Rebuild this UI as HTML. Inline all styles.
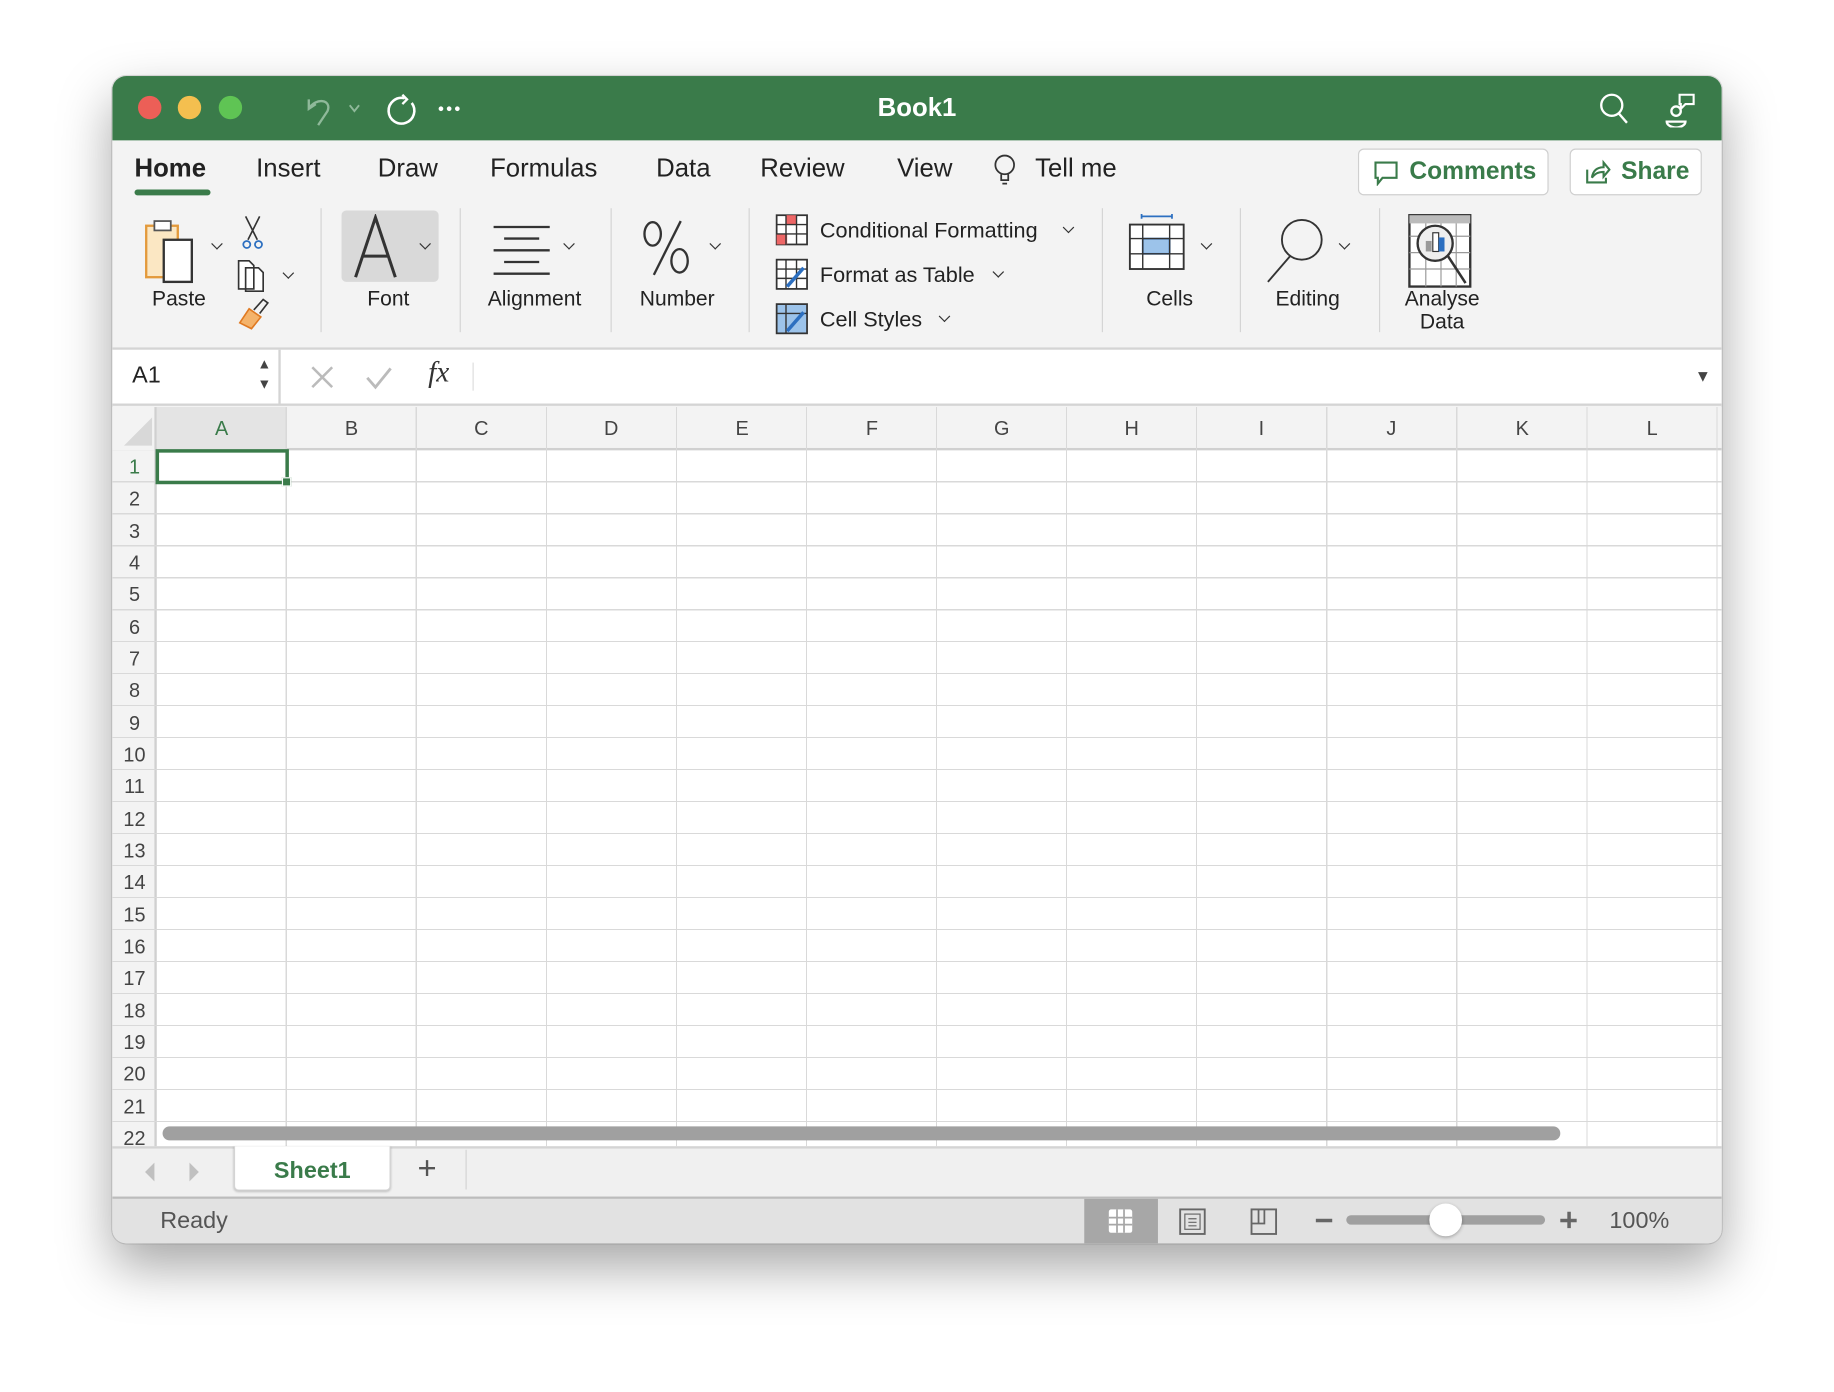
<!DOCTYPE html>
<html><head><meta charset="utf-8"><style>
*{box-sizing:border-box;margin:0;padding:0}
html,body{width:1834px;height:1392px;overflow:hidden;background:#fff;font-family:"Liberation Sans",sans-serif}
#s{position:absolute;left:0;top:0;width:1568px;height:1190px;transform:scale(1.16964);transform-origin:0 0}
.a{position:absolute}
#win{left:96px;top:65px;width:1376px;height:998px;border-radius:12px;overflow:hidden;background:#f3f3f3;box-shadow:0 20px 45px rgba(0,0,0,.35),0 0 0 1px rgba(0,0,0,.12)}
.t{position:absolute;white-space:nowrap;color:#222}
.tab{font-size:22px;top:66px}
.lbl{font-size:18px;color:#222;text-align:center}
.sep{position:absolute;top:113px;width:1px;height:106px;background:#d4d4d4}
.chev{position:absolute;width:7px;height:7px;border-right:1.6px solid #333;border-bottom:1.6px solid #333;transform:rotate(45deg)}
.ch{position:absolute;top:0;height:37px;font-size:17px;color:#444;text-align:center;line-height:37px}
.rh{position:absolute;left:0;width:38px;font-size:17px;color:#444;text-align:center}
</style></head><body><div id="s">
<div id="win" class="a">
 <div class="a" style="left:0;top:0;width:1376px;height:55px;background:#3a7b4a"></div>
 <div class="a" style="left:22px;top:17px;width:20px;height:20px;border-radius:50%;background:#ec5f57"></div>
 <div class="a" style="left:56px;top:17px;width:20px;height:20px;border-radius:50%;background:#f4bf4f"></div>
 <div class="a" style="left:91px;top:17px;width:20px;height:20px;border-radius:50%;background:#5fc454"></div>
 <svg class="a" style="left:160px;top:10px" width="150" height="36" viewBox="0 0 150 36">
  <path d="M8 10 L8 18 L14 14 M8 18 C14 8 28 10 24 20 L16 32" fill="none" stroke="#8fb99a" stroke-width="2"/>
  <path d="M43 15 l4 5 l4 -5" fill="none" stroke="#8fb99a" stroke-width="1.6"/>
  <path d="M90 9 A11 11 0 1 0 96 13" fill="none" stroke="#fff" stroke-width="2.2"/><path d="M88 6 L92 10 L88 14" fill="none" stroke="#fff" stroke-width="2"/>
  <circle cx="121" cy="18" r="2" fill="#fff"/><circle cx="128" cy="18" r="2" fill="#fff"/><circle cx="135" cy="18" r="2" fill="#fff"/>
 </svg>
 <div class="t" style="left:0;width:1376px;text-align:center;top:14px;font-size:22px;font-weight:bold;color:#fff">Book1</div>
 <svg class="a" style="left:1268px;top:12px" width="90" height="32">
  <circle cx="14" cy="13" r="9" fill="none" stroke="#fff" stroke-width="2"/><path d="M20 20 L27 28" stroke="#fff" stroke-width="2"/>
  <circle cx="69" cy="18" r="4" fill="none" stroke="#fff" stroke-width="2"/><path d="M61 27 a8 5 0 0 0 16 0 z" fill="none" stroke="#fff" stroke-width="2"/><path d="M72 4 h12 v8 h-7 l-4 4 v-4 h-1 z" fill="none" stroke="#fff" stroke-width="1.8"/>
 </svg>
 <div class="t tab" style="left:19px;font-weight:bold">Home</div>
 <div class="a" style="left:19px;top:97px;width:65px;height:5px;border-radius:3px;background:#3a7b4a"></div>
 <div class="t tab" style="left:123px">Insert</div>
 <div class="t tab" style="left:227px">Draw</div>
 <div class="t tab" style="left:323px">Formulas</div>
 <div class="t tab" style="left:465px">Data</div>
 <div class="t tab" style="left:554px">Review</div>
 <div class="t tab" style="left:671px">View</div>
 <svg class="a" style="left:752px;top:66px" width="22" height="28"><circle cx="11" cy="10" r="8" fill="none" stroke="#333" stroke-width="1.5"/><path d="M8 18 v5 h6 v-5 M9 26 h4" fill="none" stroke="#333" stroke-width="1.5"/></svg>
 <div class="t tab" style="left:789px">Tell me</div>
 <div class="a" style="left:1065px;top:62px;width:163px;height:40px;border:1px solid #cfcfcf;border-radius:5px;background:#fff"></div>
 <svg class="a" style="left:1078px;top:72px" width="22" height="22"><path d="M2 2 h18 v13 h-12 l-4 5 v-5 h-2 z" fill="none" stroke="#3a7b4a" stroke-width="1.8"/></svg>
 <div class="t" style="left:1109px;top:70px;font-size:21px;font-weight:bold;color:#3a7b4a">Comments</div>
 <div class="a" style="left:1246px;top:62px;width:113px;height:40px;border:1px solid #cfcfcf;border-radius:5px;background:#fff"></div>
 <svg class="a" style="left:1259px;top:71px" width="22" height="22"><path d="M2 9 v11 h16 v-4" fill="none" stroke="#3a7b4a" stroke-width="1.8"/><path d="M6 16 c1 -7 5 -9 10 -9 v-4 l5 6 l-5 6 v-4 c-4 0 -7 1 -10 5" fill="none" stroke="#3a7b4a" stroke-width="1.8"/></svg>
 <div class="t" style="left:1290px;top:70px;font-size:21px;font-weight:bold;color:#3a7b4a">Share</div>
 <svg class="a" style="left:24px;top:118px" width="140" height="105">
  <rect x="5" y="10" width="27" height="44" fill="#fbe7c3" stroke="#e39a3c" stroke-width="2"/><rect x="12" y="6" width="14" height="8" fill="#fff" stroke="#555" stroke-width="1.5"/>
  <rect x="20" y="22" width="24" height="36" fill="#fff" stroke="#333" stroke-width="2"/>
  <path d="M90 2 l10 20 M102 2 l-10 20" stroke="#333" stroke-width="1.4"/><circle cx="91" cy="26" r="3" fill="none" stroke="#2c6fc0" stroke-width="1.5"/><circle cx="101" cy="26" r="3" fill="none" stroke="#2c6fc0" stroke-width="1.5"/>
  <path d="M84 40 h9 l4 4 v20 h-13 z M90 46 h11 l4 4 v16 h-15 z" fill="#fff" stroke="#333" stroke-width="1.4"/>
  <path d="M85 93 l8 -12 l10 7 l-8 10 z" fill="#f4b36b" stroke="#e07a22" stroke-width="1.4"/><path d="M97 82 l8 -9 l4 3 l-7 9" fill="none" stroke="#333" stroke-width="1.4"/>
 </svg>
 <div class="chev" style="left:86px;top:140px"></div>
 <div class="chev" style="left:147px;top:165px"></div>
 <div class="lbl a" style="left:22px;top:180px;width:70px">Paste</div>
 <div class="sep" style="left:178px"></div>
 <div class="a" style="left:196px;top:115px;width:83px;height:61px;border-radius:4px;background:#d9d9d9"></div>
 <svg class="a" style="left:205px;top:118px" width="40" height="56"><path d="M3 54 L20 3 L37 54 M9 36 H31" fill="none" stroke="#333" stroke-width="2.6"/></svg>
 <div class="chev" style="left:264px;top:140px"></div>
 <div class="lbl a" style="left:196px;top:180px;width:80px">Font</div>
 <div class="sep" style="left:297px"></div>
 <svg class="a" style="left:325px;top:128px" width="60" height="45"><path d="M1 1 h48 M10 11 h30 M1 21 h48 M10 31 h30 M1 41 h48" stroke="#333" stroke-width="2"/></svg>
 <div class="chev" style="left:387px;top:140px"></div>
 <div class="lbl a" style="left:312px;top:180px;width:98px">Alignment</div>
 <div class="sep" style="left:426px"></div>
 <svg class="a" style="left:452px;top:122px" width="46" height="50"><ellipse cx="10" cy="13" rx="7" ry="10" fill="none" stroke="#333" stroke-width="2"/><ellipse cx="33" cy="36" rx="7" ry="10" fill="none" stroke="#333" stroke-width="2"/><path d="M34 2 L11 48" stroke="#333" stroke-width="2"/></svg>
 <div class="chev" style="left:512px;top:140px"></div>
 <div class="lbl a" style="left:440px;top:180px;width:86px">Number</div>
 <div class="sep" style="left:544px"></div>
 <svg class="a" style="left:567px;top:118px" width="30" height="110">
  <rect x="1" y="1" width="26" height="25" fill="#fff" stroke="#333" stroke-width="1.5"/><rect x="9" y="1" width="9" height="8" fill="#e66"/><rect x="1" y="17" width="9" height="9" fill="#e66"/><path d="M1 9 h26 M1 17 h26 M9 1 v25 M18 1 v25" stroke="#333" stroke-width="1.2"/>
  <rect x="1" y="39" width="26" height="25" fill="#fff" stroke="#333" stroke-width="1.5"/><path d="M1 47 h26 M1 55 h26 M9 39 v25 M18 39 v25" stroke="#333" stroke-width="1.2"/><path d="M10 62 l14 -16" stroke="#2c6fc0" stroke-width="3"/>
  <rect x="1" y="77" width="26" height="25" fill="#9cc3ea" stroke="#333" stroke-width="1.5"/><path d="M1 85 h26 M9 77 v25" stroke="#333" stroke-width="1.2"/><path d="M10 100 l14 -16" stroke="#2c6fc0" stroke-width="3"/>
 </svg>
 <div class="t" style="left:605px;top:121px;font-size:18.5px">Conditional Formatting</div><div class="chev" style="left:814px;top:126px"></div>
 <div class="t" style="left:605px;top:159px;font-size:18.5px">Format as Table</div><div class="chev" style="left:754px;top:164px"></div>
 <div class="t" style="left:605px;top:197px;font-size:18.5px">Cell Styles</div><div class="chev" style="left:708px;top:202px"></div>
 <div class="sep" style="left:846px"></div>
 <svg class="a" style="left:868px;top:118px" width="52" height="50"><path d="M12 2 h26 M12 0 v4 M38 0 v4" stroke="#2c6fc0" stroke-width="1.5"/><rect x="2" y="9" width="46" height="38" fill="#fff" stroke="#333" stroke-width="1.6"/><rect x="13" y="21" width="23" height="13" fill="#9cc3ea" stroke="#2c6fc0" stroke-width="1.5"/><path d="M2 21 h46 M2 34 h46 M13 9 v38 M36 9 v38" stroke="#333" stroke-width="1.2"/></svg>
 <div class="chev" style="left:932px;top:140px"></div>
 <div class="lbl a" style="left:872px;top:180px;width:64px">Cells</div>
 <div class="sep" style="left:964px"></div>
 <svg class="a" style="left:985px;top:120px" width="55" height="60"><circle cx="32" cy="20" r="17" fill="none" stroke="#333" stroke-width="1.6"/><path d="M22 34 L3 56" stroke="#333" stroke-width="1.6"/></svg>
 <div class="chev" style="left:1050px;top:140px"></div>
 <div class="lbl a" style="left:984px;top:180px;width:76px">Editing</div>
 <div class="sep" style="left:1083px"></div>
 <svg class="a" style="left:1107px;top:117px" width="58" height="66"><rect x="2" y="2" width="52" height="61" fill="#fff" stroke="#333" stroke-width="2"/><rect x="2" y="2" width="52" height="7" fill="#bbb"/><path d="M2 20 h52 M2 34 h52 M2 48 h52 M16 9 v54 M29 9 v54 M42 9 v54" stroke="#999"/><circle cx="24" cy="26" r="15" fill="#eee" stroke="#333" stroke-width="2"/><rect x="16" y="24" width="5" height="9" fill="#999"/><rect x="22" y="17" width="5" height="16" fill="#fff" stroke="#333"/><rect x="27" y="21" width="5" height="12" fill="#2c6fc0"/><path d="M35 37 L50 60" stroke="#333" stroke-width="2.2"/></svg>
 <div class="lbl a" style="left:1092px;top:180px;width:90px;line-height:20px">Analyse<br>Data</div>
 <div class="a" style="left:0;top:232px;width:1376px;height:50px;background:#fff;border-top:2px solid #d4d4d4;border-bottom:2px solid #d4d4d4"></div>
 <div class="a" style="left:0;top:234px;width:144px;height:46px;border-right:2px solid #d4d4d4"></div>
 <div class="t" style="left:17px;top:245px;font-size:20px">A1</div>
 <div class="t" style="left:124px;top:238px;font-size:12px;color:#444;line-height:17px">▲<br>▼</div>
 <svg class="a" style="left:168px;top:246px" width="80" height="24"><path d="M3 3 l17 17 M20 3 l-17 17" stroke="#bbb" stroke-width="2.2"/><path d="M50 12 l7 8 l13 -16" fill="none" stroke="#bbb" stroke-width="2.4"/></svg>
 <div class="t" style="left:270px;top:240px;font-size:25px;font-style:italic;font-family:'Liberation Serif',serif;color:#333">fx</div>
 <div class="a" style="left:308px;top:245px;width:1px;height:24px;background:#ddd"></div>
 <div class="t" style="left:1353px;top:248px;font-size:14px;color:#444">▼</div>
 <div class="a" style="left:0;top:283px;width:1376px;height:632px;background:#fff"></div>
 <div class="a" style="left:0;top:283px;width:1376px;height:37px;background:#f3f3f3;border-bottom:2px solid #d0d0d0"></div>
 <div class="a" style="left:38px;top:283px;width:111px;height:37px;background:#e4e4e4"></div>
 <div class="a" style="left:0;top:283px;width:38px;height:632px;background:#f3f3f3;border-right:2px solid #d0d0d0"></div>
 <svg class="a" style="left:8px;top:290px" width="28" height="28"><path d="M26 2 V26 H2 Z" fill="#d8d8d8"/></svg>
 <div class="a" style="left:38px;top:283px;width:1338px;height:632px;background-image:repeating-linear-gradient(to right,transparent 0,transparent 110.2px,#d9d9d9 110.2px,#d9d9d9 111.2px)"></div>
 <div class="a" style="left:0;top:320px;width:1376px;height:595px;background-image:repeating-linear-gradient(to bottom,transparent 0,transparent 26.35px,#d9d9d9 26.35px,#d9d9d9 27.35px)"></div>
 <div class="ch" style="left:38px;width:111px;color:#3a7b4a;top:283px">A</div>
 <div class="ch" style="left:149px;width:111px;top:283px">B</div>
 <div class="ch" style="left:260px;width:111px;top:283px">C</div>
 <div class="ch" style="left:371px;width:111px;top:283px">D</div>
 <div class="ch" style="left:483px;width:111px;top:283px">E</div>
 <div class="ch" style="left:594px;width:111px;top:283px">F</div>
 <div class="ch" style="left:705px;width:111px;top:283px">G</div>
 <div class="ch" style="left:816px;width:111px;top:283px">H</div>
 <div class="ch" style="left:927px;width:111px;top:283px">I</div>
 <div class="ch" style="left:1038px;width:111px;top:283px">J</div>
 <div class="ch" style="left:1150px;width:111px;top:283px">K</div>
 <div class="ch" style="left:1261px;width:111px;top:283px">L</div>
 <div class="rh" style="top:325px;color:#3a7b4a">1</div>
 <div class="rh" style="top:352px">2</div><div class="rh" style="top:380px">3</div><div class="rh" style="top:407px">4</div><div class="rh" style="top:434px">5</div><div class="rh" style="top:462px">6</div><div class="rh" style="top:489px">7</div><div class="rh" style="top:516px">8</div><div class="rh" style="top:544px">9</div><div class="rh" style="top:571px">10</div><div class="rh" style="top:598px">11</div><div class="rh" style="top:626px">12</div><div class="rh" style="top:653px">13</div><div class="rh" style="top:680px">14</div><div class="rh" style="top:708px">15</div><div class="rh" style="top:735px">16</div><div class="rh" style="top:762px">17</div><div class="rh" style="top:790px">18</div><div class="rh" style="top:817px">19</div><div class="rh" style="top:844px">20</div><div class="rh" style="top:872px">21</div><div class="rh" style="top:899px">22</div>
 <div class="a" style="left:37px;top:319px;width:114px;height:30px;border:3px solid #3a7b4a"></div>
 <div class="a" style="left:145px;top:343px;width:8px;height:8px;background:#3a7b4a;border:1px solid #fff"></div>
 <div class="a" style="left:43px;top:898px;width:1195px;height:12px;border-radius:6px;background:#a0a0a0"></div>
 <div class="a" style="left:0;top:915px;width:1376px;height:45px;background:#f0f0f0;border-top:2px solid #d4d4d4;border-bottom:2px solid #bcbcbc"></div>
 <svg class="a" style="left:24px;top:927px" width="60" height="20"><path d="M12 2 L4 10 L12 18 Z" fill="#c0c0c0"/><path d="M42 2 L50 10 L42 18 Z" fill="#c0c0c0"/></svg>
 <div class="a" style="left:104px;top:915px;width:134px;height:38px;background:#fff;border:1px solid #d4d4d4;border-top:none;border-radius:0 0 4px 4px;box-shadow:0 1px 2px rgba(0,0,0,.2)"></div>
 <div class="t" style="left:104px;width:134px;text-align:center;top:925px;font-size:20px;font-weight:bold;color:#3a7b4a">Sheet1</div>
 <div class="t" style="left:261px;top:918px;font-size:28px;color:#555">+</div>
 <div class="a" style="left:302px;top:918px;width:1px;height:34px;background:#d4d4d4"></div>
 <div class="a" style="left:0;top:960px;width:1376px;height:38px;background:#e2e2e2"></div>
 <div class="t" style="left:41px;top:968px;font-size:20px;color:#555">Ready</div>
 <div class="a" style="left:831px;top:960px;width:63px;height:38px;background:#a7a7a7"></div>
 <svg class="a" style="left:850px;top:967px" width="250" height="26">
  <rect x="2" y="2" width="20" height="20" fill="#fff" rx="2"/><path d="M9 2 v20 M15 2 v20 M2 9 h20 M2 15 h20" stroke="#a7a7a7" stroke-width="1.5"/>
  <rect x="63" y="2" width="21" height="21" fill="none" stroke="#666" stroke-width="1.6"/><rect x="67" y="6" width="13" height="13" fill="none" stroke="#666"/><path d="M70 10 h7 M70 13 h7 M70 16 h7" stroke="#666"/>
  <rect x="124" y="2" width="21" height="21" fill="none" stroke="#666" stroke-width="1.6"/><path d="M124 14 h11 V2 M130 2 v12" stroke="#666" stroke-width="1.5" fill="none"/>
 </svg>
 <div class="a" style="left:1029px;top:977px;width:14px;height:3px;background:#666"></div>
 <div class="a" style="left:1055px;top:974px;width:170px;height:8px;border-radius:4px;background:#a0a0a0"></div>
 <div class="a" style="left:1126px;top:964px;width:28px;height:28px;border-radius:50%;background:#fff;box-shadow:0 1px 3px rgba(0,0,0,.3)"></div>
 <div class="a" style="left:1238px;top:977px;width:14px;height:3px;background:#666"></div>
 <div class="a" style="left:1244px;top:971px;width:3px;height:14px;background:#666"></div>
 <div class="t" style="left:1280px;top:968px;font-size:20px;color:#555">100%</div>
</div>
</div></body></html>
